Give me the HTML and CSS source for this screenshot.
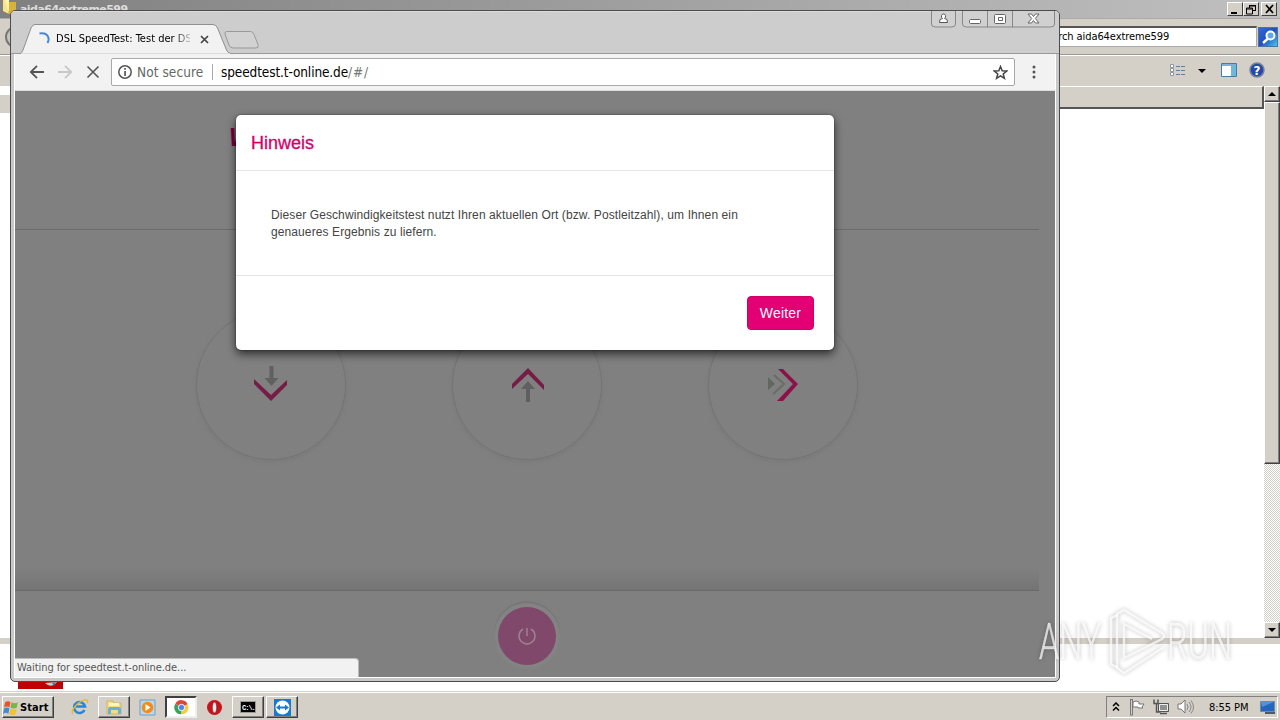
FILE: index.html
```html
<!DOCTYPE html>
<html lang="de">
<head>
<meta charset="utf-8">
<title>DSL SpeedTest</title>
<link rel="stylesheet" href="styles.css">
</head>
<body>
<div class="desktop">
  <section class="explorer">
    <header class="ex-title">
      <svg class="folder" width="16" height="16"><path d="M1 0h6v14l-6-3z" fill="#f7e48b"/><path d="M6 2h8v12H6z" fill="#d9b13b"/><path d="M3 0h4v13z" fill="#fff4b4"/></svg>
      <b>aida64extreme599</b>
      <div class="winbtns">
        <i><svg width="15" height="13"><path d="M3 9h6v2H3z"/></svg></i><i><svg width="15" height="13"><path d="M5.500 2v3M5 2.500h7M11.500 2v6M9 7.500h2M2.500 5v6h6v-6zM2 6h7M5 3h7" fill="none" stroke="#000"/></svg></i><i class="gap"><svg width="15" height="13"><path d="M4 2l7 8M11 2l-7 8" stroke="#000" stroke-width="1.700"/></svg></i>
      </div>
    </header>
    <div class="ex-address">
      <span class="ex-back"></span>
      <div class="ex-search">Search aida64extreme599</div>
      <span class="ex-go"><svg width="20" height="20"><circle cx="11.500" cy="7.500" r="4" fill="#5fa8ec" stroke="#fff" stroke-width="2"/><path d="M8.500 11l-4.500 4" stroke="#fff" stroke-width="2.500"/></svg></span>
    </div>
    <div class="ex-tools">
      <svg width="18" height="14"><g fill="#fff" stroke="#8a98a8"><path d="M1.500 1.500h3v3h-3zM1.500 5.500h3v3h-3zM1.500 9.500h3v3h-3z"/></g><path d="M7 3.500h9M7 7.500h9M7 11.500h9" stroke="#6b7d96" stroke-dasharray="4 1"/></svg>
      <svg class="caret" width="8" height="4"><path d="M0 0h8l-4 4z"/></svg>
      <svg class="pane" width="16" height="14"><path d="M.5.500h15v13H.5z" fill="#fff" stroke="#3f7ea6"/><path d="M1 1h14v2H1z" fill="#78b5d8"/><path d="M10 3h5v10h-5z" fill="#6fb8dc"/></svg>
      <svg width="16" height="16"><circle cx="8" cy="8" r="7" fill="#2549a8" stroke="#73849e" stroke-width="1.500"/><text x="8" y="12.500" text-anchor="middle" class="q">?</text></svg>
    </div>
    <div class="ex-main">
      <div class="ex-files"><div class="ex-head"></div><div class="ex-row"></div></div>
      <div class="scroll">
        <i><svg width="14" height="14"><path d="M3 9h8L7 5z"/></svg></i>
        <b></b><s></s>
        <i><svg width="14" height="14"><path d="M3 5h8L7 9z"/></svg></i>
      </div>
    </div>
    <div class="ex-split"></div>
    <div class="ex-details"><svg width="45" height="45"><path d="M0 0h45v45H0z" fill="#c00000"/><path d="M27 39q6 6 12-1z" fill="#b8d6bb"/><path d="M34 39l4-1-2 4z" fill="#427baa"/></svg></div>
  </section>

  <footer class="taskbar">
    <div class="start"><svg width="17" height="17" viewBox="0 0 16 16"><path d="M2 3q3-2 5 0L6 8Q4 6 1 8z" fill="#e6532a"/><path d="M8 3q3 2 6 0l-1 5q-3 2-6 0z" fill="#76b843"/><path d="M1 9q3-2 5 0l-1 5q-2-2-5 0z" fill="#4289d0"/><path d="M7 9q3 2 6 0l-1 5q-3 2-6 0z" fill="#f4c32c"/></svg><b>Start</b></div>
    <span class="task"><svg width="18" height="18" viewBox="0 0 18 18"><path d="M13.500 12A5.500 5.500 0 1 1 14 8.500H5" fill="none" stroke="#2a86d4" stroke-width="2.600"/><path d="M2 16C-2 13 9 1 16 2c1 0 1 2 0 3" fill="none" stroke="#e6b929" stroke-width="1.300"/></svg></span>
    <span class="task up"><svg width="18" height="18" viewBox="0 0 18 18"><path d="M2 3h6l1 2h7v11H2z" fill="#f4dc83" stroke="#c5a74c" stroke-width=".7"/><path d="M4 5h10v3H4z" fill="#fff5bd"/><path d="M3 16v-5q0-2 2-2h9q2 0 2 2v5h-3v-4H6v4z" fill="#66b2de"/></svg></span>
    <span class="task"><svg width="17" height="17" viewBox="0 0 17 17"><path d="M1 1h15v15H1z" fill="#b9d7ee" stroke="#6f9fcb"/><circle cx="8.500" cy="8.500" r="5.800" fill="#f48b16"/><path d="M6.500 5l5 3.500-5 3.500z" fill="#fff"/></svg></span>
    <span class="task down"><svg width="15" height="15" viewBox="0 0 16 16"><path d="M8 8L1.500 4A7.200 7.200 0 0 1 14.500 4.500z" fill="#df4434"/><path d="M8 8l6.500-3.500A7.200 7.200 0 0 1 7.500 15.200z" fill="#f8cd36"/><path d="M8 8l-.5 7.200A7.200 7.200 0 0 1 1.500 4z" fill="#35a455"/><circle cx="8" cy="8" r="3.400" fill="#4688ef" stroke="#fff"/></svg></span>
    <span class="task"><svg width="17" height="17" viewBox="0 0 17 17"><circle cx="8.500" cy="8.500" r="7.500" fill="#c4161c"/><ellipse cx="8.500" cy="8.500" rx="2.200" ry="5.400" fill="#eee" stroke="#8d0c10" stroke-width=".6"/></svg></span>
    <span class="task up"><svg width="17" height="13"><path d="M.5.500h15v11H.5z" fill="#000" stroke="#999"/><text x="2" y="9" class="cmd">C:\.</text></svg></span>
    <span class="task up"><svg width="17" height="17" viewBox="0 0 17 17"><path d="M0 0h17v17H0z" fill="#1679d8"/><circle cx="8.500" cy="8.500" r="7" fill="#fff"/><path d="M2 8.500l4-3v2h5v-2l4 3-4 3v-2H6v2z" fill="#1679d8"/></svg></span>
    <div class="tray">
      <svg width="8" height="10"><path d="M1 4l3-3 3 3M1 8.500l3-3 3 3" fill="none" stroke="#000" stroke-width="1.500"/></svg>
      <svg class="t1" width="17" height="17"><path d="M1.500 1v15M3.500 1v15M1 .500h3M1 16h3" stroke="#777" fill="none"/><path d="M4 3q3-2 6 0v2h5l-2 3 1 1H9V8H4z" fill="#fff" stroke="#777"/></svg>
      <svg class="t2" width="17" height="17"><path d="M5.500 4.500h10v8h-10z" fill="#909090" stroke="#555"/><path d="M6.500 5.500h8v6h-8z" fill="none" stroke="#eee"/><path d="M7 14.500h7M1 .500v4h4v-4M3.500 4v9h4" fill="none" stroke="#555" stroke-width="1.500"/></svg>
      <svg class="t3" width="18" height="16"><path d="M1 5h3l4-4v13l-4-4H1z" fill="#fff" stroke="#777"/><path d="M10 5q2 3 0 6M12 3q4 5 0 10M14 1.500q5 6.500 0 13" fill="none" stroke="#888"/></svg>
      <time>8:55 PM</time>
      <svg class="t4" width="15" height="13"><path d="M.5.500h14v10H.5z" fill="#2466bd" stroke="#6f8ba8"/><path d="M1 1h13L2 6z" fill="#578fdd"/><path d="M5 12h10" stroke="#234" stroke-width="1.500"/></svg>
    </div>
  </footer>

  <section class="chrome">
    <header class="tabs">
      <div class="tab">
        <svg class="tabshape" width="212" height="30"><path d="M0 29.500C2 29 2 28 3 26L11 4q1.500-3.500 4-3.500h178q3 0 4.500 3.500l9 22q1.500 3 4 3.500" fill="#f2f2f2" stroke="#8f8f8f"/><path d="M1 30h209" stroke="#f2f2f2"/></svg>
        <svg class="spin" width="14" height="14"><path d="M1.500 1.500Q9 .500 10.500 6q.5 2.500-1 5" fill="none" stroke="#4a86dc" stroke-width="2"/></svg>
        <span class="tabtext">DSL SpeedTest: Test der DSL</span>
        <svg class="x" width="9" height="9"><path d="M1 1l7 7M8 1L1 8" stroke="#444" stroke-width="1.700"/></svg>
      </div>
      <svg class="newtab" width="37" height="18"><path d="M2.500.500h24q2.500 0 3.500 3l4 10q1 3.500-2 3.500H9q-3 0-4-3L1 3Q.500.500 2.500.500z" fill="#d2d2d2" stroke="#999"/></svg>
      <div class="ctrl">
        <svg width="25" height="18"><path d="M.5 0v13q0 3 4 3h16q4 0 4-3V0" fill="#d0d0d0" stroke="#888"/><path d="M8.500 11.500q-.5-4 3-4-1.500-1-1-3 .5-1.500 2-1.500t2 1.500q.5 2-1 3 3.500 0 3 4z" fill="#fff" stroke="#555"/></svg>
        <svg width="94" height="18"><path d="M.5 0v13q0 3 4 3h84q4 0 4-3V0M25.500 0v16M50.500 0v16" fill="#d0d0d0" stroke="#888"/><g fill="#fff" stroke="#666"><rect x="7.500" y="8.500" width="11" height="4" rx="1"/><rect x="32.500" y="3.500" width="11" height="9" rx="1"/><path d="M36.500 6.500h4v3h-4z"/><path d="M66 3h3.500l2 2.500L73.500 3H77l-3.700 4.500L77 12h-3.500l-2-2.500-2 2.500H66l3.700-4.500z"/></g></svg>
      </div>
    </header>
    <div class="bar">
      <svg width="72" height="16" fill="none" stroke="#555" stroke-width="1.800"><path d="M15 8H2M8 1.800L1.800 8 8 14.200"/><path d="M29 8h13M36 1.800L42.200 8 36 14.200" stroke="#c8c8c8"/><path d="M58.500 2.500l11 11M69.500 2.500l-11 11" stroke-width="1.600"/></svg>
      <div class="omni">
        <svg width="14" height="14"><circle cx="7" cy="7" r="6.200" fill="none" stroke="#555" stroke-width="1.500"/><path d="M6.200 3h1.700v1.700H6.200zM6.200 6h1.700v5H6.200z" fill="#555"/></svg>
        <span class="ns">Not secure</span><span class="sep"></span><span class="url">speedtest.t-online.de<em>/#/</em></span>
        <svg class="star" width="15" height="15"><path d="M7.500 1.500l1.700 4.200 4.500.3-3.500 2.900 1.200 4.400-3.900-2.500-3.900 2.500 1.200-4.400L1.300 6l4.500-.3z" fill="none" stroke="#444" stroke-width="1.500"/></svg>
      </div>
      <svg width="4" height="14" fill="#555"><circle cx="2" cy="2" r="1.500"/><circle cx="2" cy="7" r="1.500"/><circle cx="2" cy="12" r="1.500"/></svg>
    </div>
    <main class="page">
      <div class="pagehead"><b>W</b></div>
      <div class="gauges">
        <div class="gauge"><svg class="down-icon" width="34" height="36"><path d="M0 13v5l17 17 16-16v-5L17 29z" fill="#751d46"/><path d="M15.500 0h4v12h5l-7 8-7-8h5z" fill="#606060"/></svg></div>
        <div class="gauge"><svg class="up-icon" width="34" height="36"><path d="M1 17L17 1l16 17v5L17 7 1 22z" fill="#751d46"/><path d="M17 14l7 8h-5v13h-4V22h-5z" fill="#606060"/></svg></div>
        <div class="gauge"><svg class="up-icon" width="34" height="36"><path d="M11 2h5l15 15-15 17h-6l16-17z" fill="#8a1248"/><path d="M7 8l10 9-11 10" fill="none" stroke="#686e68" stroke-width="2.200"/><path d="M1 10l7 7-7 6z" fill="#606860"/></svg></div>
      </div>
      <div class="pagefoot"><div class="power"><svg width="20" height="20"><path d="M6 3A8 8 0 1 0 14 3M10 2v8" fill="none" stroke="#9b8290" stroke-width="1.500"/></svg></div></div>
    </main>
    <div class="status">Waiting for speedtest.t-online.de...</div>
    <div class="modal">
      <h1>Hinweis</h1>
      <p>Dieser Geschwindigkeitstest nutzt Ihren aktuellen Ort (bzw. Postleitzahl), um Ihnen ein<br>genaueres Ergebnis zu liefern.</p>
      <div class="actions"><button>Weiter</button></div>
    </div>
  </section>

  <svg class="mark" width="204" height="76">
    <g class="marktext"><text x="3" y="53" textLength="62" lengthAdjust="spacingAndGlyphs">ANY</text><text x="131" y="53" textLength="65" lengthAdjust="spacingAndGlyphs">RUN</text></g>
    <path d="M82 9l-7 3v46l7 4M69 0" fill="none" stroke="#fff" stroke-opacity=".72" stroke-width="2.500"/>
    <path d="M81 61V8l7-4 38 23q4 3 0 6L88 52V18l28 15M80 61l8 6 40-26" fill="none" stroke="#fff" stroke-opacity=".72" stroke-width="2.500"/>
  </svg>
</div>
</body>
</html>
```

FILE: styles.css
```css
* { box-sizing: border-box; }
body { margin: 0; font-family: "DejaVu Sans Condensed", "DejaVu Sans", sans-serif; font-stretch: condensed; }
svg { display: block; flex: none; }
.desktop { position: relative; width: 1280px; height: 720px; overflow: hidden; display: flex; flex-direction: column; background: #fff; }

.explorer { flex: 1; min-height: 0; display: flex; flex-direction: column; background: #d4d0c8; }
.ex-title { height: 18px; display: flex; align-items: flex-start; padding: 0 3px 0 2px; background: linear-gradient(90deg, #808080, #c0c0c0); }
.ex-title > b { font: bold 11px/20px "DejaVu Sans", sans-serif; color: #ddd; margin-left: 2px; letter-spacing: -.55px; }
.winbtns { margin: 2px 0 0 auto; display: flex; }
.winbtns i { width: 16px; height: 14px; background: #d4d0c8; border: 1px solid; border-color: #fff #404040 #404040 #fff; }
.winbtns .gap { margin-left: 2px; }
.ex-address { height: 37px; display: flex; align-items: center; border-top: 1px solid #aaa; border-bottom: 1px solid #999; padding: 0 2px 0 5px; }
.ex-back { width: 22px; height: 22px; border: 2px solid #777; border-radius: 50%; background: #c8c5bf; }
.ex-search { margin-left: auto; width: 238px; height: 21px; padding-left: 20px; background: #fff; border: 1px solid #aaa; border-top: 2px solid #555; font-size: 11px; line-height: 18px; letter-spacing: -.08px; }
.ex-go { width: 20px; height: 20px; margin-left: 1px; background: linear-gradient(135deg, #3468d2, #2050c0 50%, #46c8ee); border: 1px solid #5070a0; }
.ex-tools { height: 31px; display: flex; align-items: center; justify-content: flex-end; padding: 0 15px 2px 0; border-top: 1px solid #fff; }
.caret { margin: 1px 15px 0 11px; }
.pane { margin-right: 12px; }
.q { font: bold 12px "DejaVu Sans", sans-serif; fill: #fff; }
.ex-main { height: 552px; display: flex; background: #fff; }
.ex-files { flex: 1; }
.ex-head { height: 23px; margin-left: 20px; background: #d4d0c8; border-top: 1px solid #fff; border-right: 2px solid #555; border-bottom: 2px solid #555; }
.ex-row { width: 10px; height: 18px; margin-top: -14px; background: #d4d0c8; }
.scroll { width: 16px; display: flex; flex-direction: column; background: #d4d0c8; }
.scroll i, .scroll b { background: #d4d0c8; border: 1px solid; border-color: #fff #404040 #404040 #fff; box-shadow: inset -1px -1px #808080; }
.scroll i { height: 16px; }
.scroll b { height: 362px; }
.scroll s { flex: 1; background: repeating-conic-gradient(#fff 0 25%, #d4d0c8 0 50%) 0 0 / 2px 2px; }
.ex-split { height: 6px; background: #d4d0c8; }
.ex-details { flex: 1; background: #fff; padding: 0 0 0 18px; }

.taskbar { height: 28px; background: #d4d0c8; border-top: 1px solid #fff; box-shadow: 0 -1px #d4d0c8; display: flex; align-items: center; padding: 1px 2px 0; }
.start, .up { border: 1px solid; border-color: #fff #404040 #404040 #fff; box-shadow: inset -1px -1px #808080; }
.start { width: 52px; height: 22px; display: flex; align-items: center; font-size: 11px; margin-right: 10px; }
.start b { letter-spacing: .1px; }
.task { width: 32px; height: 22px; margin-right: 1.700px; display: flex; align-items: center; justify-content: center; }
.down { background: #fff; border: 2px solid; border-color: #404040 #eee #eee #404040; }
.cmd { font: bold 7px "Liberation Mono", monospace; fill: #fff; letter-spacing: -1px; }
.tray { margin-left: auto; width: 172px; height: 22px; border: 1px solid; border-color: #808080 #fff #fff #808080; display: flex; align-items: center; padding-left: 5px; font-size: 11px; }
.t1 { margin-left: 9px; }
.t2 { margin-left: 7px; }
.t3 { margin-left: 7px; }
.tray time { margin-left: 14px; width: 51px; white-space: nowrap; letter-spacing: -.05px; }
.t4 { margin-left: 0; }

.chrome { position: absolute; left: 10px; top: 10px; width: 1050px; height: 672px; border: 1px solid #4c4c4c; border-radius: 5px; background: #c8c8c8; display: flex; flex-direction: column; padding: 0 3px 3px; }
.tabs { height: 43px; margin: 0 -3px; padding: 0 3px 0 9px; display: flex; align-items: flex-end; border-radius: 4px 4px 0 0; background: linear-gradient(#dcdcdc 0 1px, #cdcdcd 1px); border-bottom: 1px solid #999; }
.tab { position: relative; width: 204px; height: 29px; display: flex; align-items: center; padding: 1px 0 0 18px; }
.tabshape { position: absolute; left: 0; top: 0; }
.spin, .tabtext, .x { position: relative; }
.tabtext { width: 134px; height: 16px; margin-left: 4px; overflow: hidden; white-space: nowrap; font-size: 11px; line-height: 16px; letter-spacing: .02px; -webkit-mask-image: linear-gradient(90deg, #000 118px, transparent 138px); }
.x { margin-left: 10px; }
.newtab { margin: 0 0 4px 0; }
.ctrl { margin-left: auto; align-self: flex-start; display: flex; gap: 6px; }
.bar { height: 37px; background: #f2f2f2; border-left: 1px solid #fff; border-right: 1px solid #fff; border-bottom: 1px solid #ddd; display: flex; align-items: center; padding: 0 19px 0 14px; }
.omni { flex: 1; height: 28px; margin: 0 17px 0 10px; border: 1px solid #a8a8a8; border-radius: 2px; background: #fff; display: flex; align-items: center; padding: 0 6px; font-size: 13.500px; white-space: nowrap; }
.ns { margin-left: 5px; color: #666; width: 67px; letter-spacing: .08px; }
.sep { width: 1px; height: 16px; margin: 0 8px; background: #aaa; }
.url { color: #000; letter-spacing: -.11px; }
.url em { font-style: normal; color: #777; letter-spacing: .8px; }
.star { margin-left: auto; }
.page { flex: 1; border: 1px solid #fff; border-top: 0; background: #808080; display: flex; flex-direction: column; }
.pagehead { height: 139px; width: 1024px; border-bottom: 1px solid #6c6c6c; padding: 32px 0 0 214px; font: italic bold 25px "Liberation Sans", sans-serif; color: #7a003f; }
.gauges { height: 361px; width: 1024px; padding: 80px 0 0 181px; display: flex; gap: 106px; background: linear-gradient(#808080 338px, #747474); border-bottom: 1px solid #696969; }
.gauge { width: 150px; height: 150px; border: 1px solid #747474; border-radius: 50%; display: flex; align-items: center; justify-content: center; box-shadow: 0 2px 4px #797979; }
.down-icon { margin-top: -2px; }
.up-icon { margin-left: 2px; }
.pagefoot { flex: 1; width: 1024px; padding-top: 16px; display: flex; justify-content: center; align-items: flex-start; }
.power { width: 58px; height: 58px; border-radius: 50%; background: #80486a; box-shadow: 0 0 0 4px #838383, 0 -2px 1px 4px #777; display: flex; align-items: center; justify-content: center; }
.status { position: absolute; left: 4px; bottom: 4px; width: 344px; height: 19px; background: #f2f2f2; border: 1px solid #bbb; border-left: 0; border-bottom: 0; border-radius: 0 4px 0 0; padding-left: 2px; color: #555; font-size: 11px; line-height: 18px; letter-spacing: -.07px; }

.modal { position: absolute; left: 225px; top: 104px; width: 598px; height: 235px; background: #fff; border-radius: 5px; box-shadow: 0 4px 10px rgba(0,0,0,.65), 0 0 2px rgba(0,0,0,.5); font-family: "Liberation Sans", Arial, sans-serif; font-stretch: normal; }
.modal h1 { margin: 0; height: 56px; padding-left: 15px; border-bottom: 1px solid #e5e5e5; font-size: 18px; line-height: 57px; font-weight: 500; color: #d2006b; -webkit-text-stroke: .3px #d2006b; }
.modal p { margin: 0; height: 105px; padding: 36px 0 0 35px; border-bottom: 1px solid #e5e5e5; font-size: 12px; line-height: 17px; color: #444; letter-spacing: .1px; }
.actions { display: flex; justify-content: flex-end; padding: 20px 20px 0; }
.actions button { width: 67px; height: 34px; padding: 0; border: 1px solid #cf0062; border-radius: 4px; background: #e20074; color: #fff; font: 14px "Liberation Sans", Arial, sans-serif; letter-spacing: .2px; }

.mark { position: absolute; left: 1036px; top: 606px; filter: drop-shadow(0 0 2px rgba(0,0,0,.35)); }
.marktext { font: 300 50px Roboto, sans-serif; fill: #fff; fill-opacity: .7; stroke: #fff; stroke-opacity: .5; stroke-width: .6; }
```
